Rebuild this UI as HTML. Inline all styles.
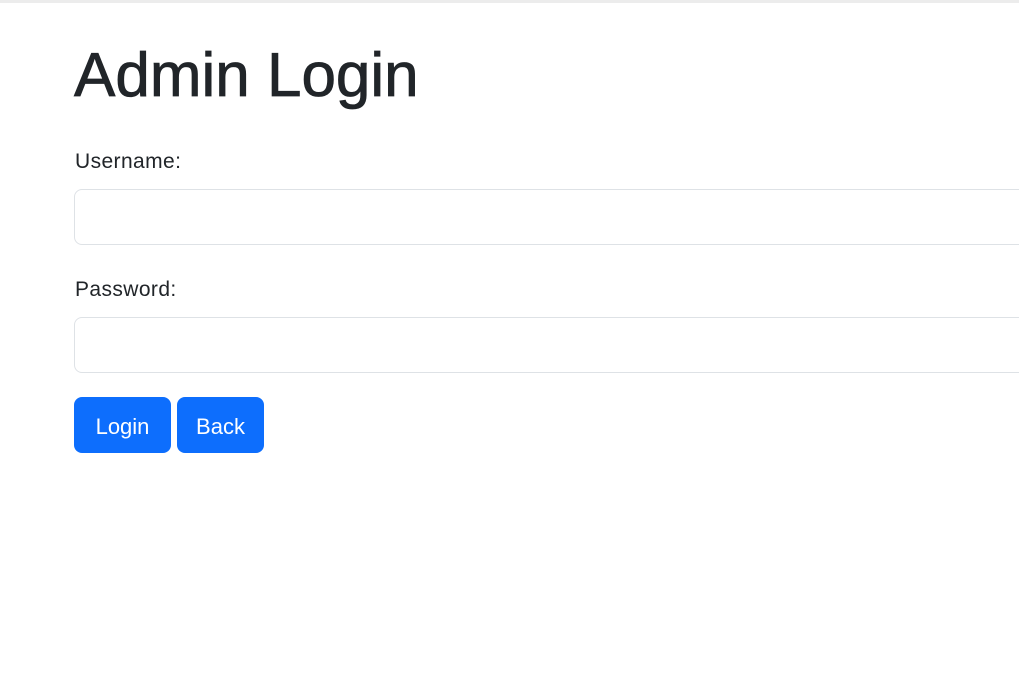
<!DOCTYPE html>
<html><head><style>
body{margin:0;background:#fff;font-family:"Liberation Sans",sans-serif;color:#212529;}
.top{height:3px;background:#ececec;}
h1{position:absolute;left:74px;top:38px;margin:0;font-size:62px;font-weight:500;line-height:76px;-webkit-text-stroke:0.8px #212529;}
.lab{position:absolute;left:75px;font-size:21px;line-height:24px;letter-spacing:0.4px;}
.inp{position:absolute;left:74px;width:1000px;height:54px;border:1px solid #dee2e6;border-radius:8px;}
.btn{position:absolute;top:397px;height:56px;background:#0d6efd;color:#fff;border-radius:8px;font-size:22px;line-height:60px;text-align:center;}
</style></head><body>
<div class="top"></div>
<h1>Admin Login</h1>
<div class="lab" style="top:150px">Username:</div>
<div class="inp" style="top:189px"></div>
<div class="lab" style="top:278px">Password:</div>
<div class="inp" style="top:317px"></div>
<div class="btn" style="left:74px;width:97px">Login</div>
<div class="btn" style="left:177px;width:87px">Back</div>
</body></html>
